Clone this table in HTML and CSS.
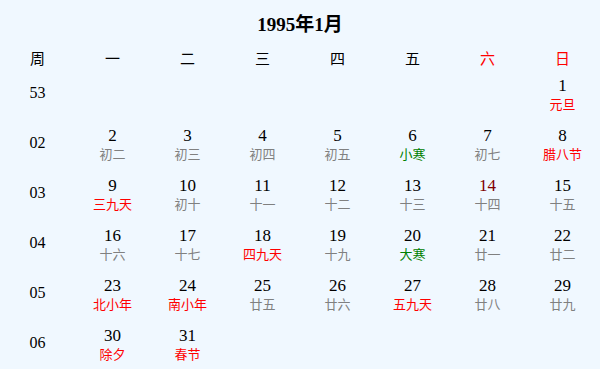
FILE: index.html
```html
<!DOCTYPE html>
<html lang="zh">
<head>
<meta charset="utf-8">
<link rel="stylesheet" href="styles.css">
</head>
<body>
<div class="cal">
  <div class="title">1995年1月</div>
  <div class="grid">
    <div class="hd">周</div><div class="hd">一</div><div class="hd">二</div><div class="hd">三</div><div class="hd">四</div><div class="hd">五</div><div class="hd red">六</div><div class="hd red">日</div>

    <div class="wk">53</div>
    <div class="day"></div><div class="day"></div><div class="day"></div><div class="day"></div><div class="day"></div><div class="day"></div>
    <div class="day"><span class="n">1</span><span class="l red">元旦</span></div>

    <div class="wk">02</div>
    <div class="day"><span class="n">2</span><span class="l">初二</span></div>
    <div class="day"><span class="n">3</span><span class="l">初三</span></div>
    <div class="day"><span class="n">4</span><span class="l">初四</span></div>
    <div class="day"><span class="n">5</span><span class="l">初五</span></div>
    <div class="day"><span class="n">6</span><span class="l green">小寒</span></div>
    <div class="day"><span class="n">7</span><span class="l">初七</span></div>
    <div class="day"><span class="n">8</span><span class="l red">腊八节</span></div>

    <div class="wk">03</div>
    <div class="day"><span class="n">9</span><span class="l red">三九天</span></div>
    <div class="day"><span class="n">10</span><span class="l">初十</span></div>
    <div class="day"><span class="n">11</span><span class="l">十一</span></div>
    <div class="day"><span class="n">12</span><span class="l">十二</span></div>
    <div class="day"><span class="n">13</span><span class="l">十三</span></div>
    <div class="day"><span class="n dark">14</span><span class="l">十四</span></div>
    <div class="day"><span class="n">15</span><span class="l">十五</span></div>

    <div class="wk">04</div>
    <div class="day"><span class="n">16</span><span class="l">十六</span></div>
    <div class="day"><span class="n">17</span><span class="l">十七</span></div>
    <div class="day"><span class="n">18</span><span class="l red">四九天</span></div>
    <div class="day"><span class="n">19</span><span class="l">十九</span></div>
    <div class="day"><span class="n">20</span><span class="l green">大寒</span></div>
    <div class="day"><span class="n">21</span><span class="l">廿一</span></div>
    <div class="day"><span class="n">22</span><span class="l">廿二</span></div>

    <div class="wk">05</div>
    <div class="day"><span class="n">23</span><span class="l red">北小年</span></div>
    <div class="day"><span class="n">24</span><span class="l red">南小年</span></div>
    <div class="day"><span class="n">25</span><span class="l">廿五</span></div>
    <div class="day"><span class="n">26</span><span class="l">廿六</span></div>
    <div class="day"><span class="n">27</span><span class="l red">五九天</span></div>
    <div class="day"><span class="n">28</span><span class="l">廿八</span></div>
    <div class="day"><span class="n">29</span><span class="l">廿九</span></div>

    <div class="wk">06</div>
    <div class="day"><span class="n">30</span><span class="l red">除夕</span></div>
    <div class="day"><span class="n">31</span><span class="l red">春节</span></div>
    <div class="day"></div><div class="day"></div><div class="day"></div><div class="day"></div><div class="day"></div>
  </div>
</div>
</body>
</html>
```

FILE: styles.css
```css
html, body {
  margin: 0;
  padding: 0;
  background: #f0f8ff;
}
body {
  font-family: "Liberation Serif", "Noto Sans CJK SC", serif;
  color: #000;
}
.cal {
  width: 600px;
}
.title {
  font-weight: bold;
  font-size: 19px;
  line-height: 22px;
  text-align: center;
  padding-top: 14px;
  height: 34px;
}
.grid {
  display: grid;
  grid-template-columns: repeat(8, 75px);
  grid-template-rows: 20px;
  grid-auto-rows: 50px;
}
.hd {
  font-family: "Noto Sans CJK SC", sans-serif;
  font-size: 15px;
  line-height: 20px;
  text-align: center;
}
.wk {
  display: flex;
  align-items: center;
  justify-content: center;
  font-size: 16px;
}
.day {
  display: flex;
  flex-direction: column;
  align-items: center;
  justify-content: flex-start;
  padding-top: 8px;
}
.n {
  font-size: 17px;
  line-height: 19px;
}
.l {
  font-family: "Noto Sans CJK SC", sans-serif;
  font-size: 13px;
  line-height: 18px;
  color: #808080;
}
.red { color: #ff0000; }
.green { color: #008000; }
.dark { color: #800000; }
```
